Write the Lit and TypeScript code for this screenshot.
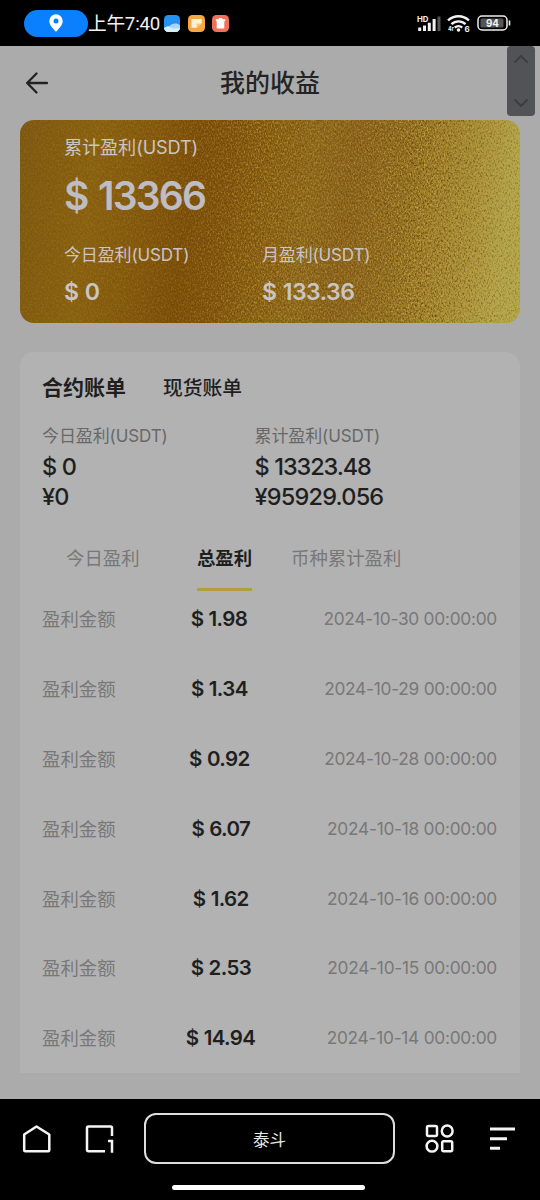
import { LitElement, html, css } from "lit";
import { customElement } from "lit/decorators.js";

const records = [
  { amount: "$ 1.98", date: "2024-10-30 00:00:00" },
  { amount: "$ 1.34", date: "2024-10-29 00:00:00" },
  { amount: "$ 0.92", date: "2024-10-28 00:00:00" },
  { amount: "$ 6.07", date: "2024-10-18 00:00:00" },
  { amount: "$ 1.62", date: "2024-10-16 00:00:00" },
  { amount: "$ 2.53", date: "2024-10-15 00:00:00" },
  { amount: "$ 14.94", date: "2024-10-14 00:00:00" },
];

@customElement("status-bar")
class StatusBar extends LitElement {
  static styles = css`
    :host { display: flex; height: 46px; background: #000; color: #f2f2f2; align-items: center; box-sizing: border-box; padding: 0 29px 0 24px; }
    svg { display: block; flex: none; }
    .pill { width: 64px; height: 27px; border-radius: 14px; background: #0b80ff; display: flex; align-items: center; justify-content: center; }
    .time { font: 400 18.7px/28px Roboto, "Noto Sans CJK SC", sans-serif; width: 70px; letter-spacing: -0.25px; white-space: nowrap; margin-top: 1px; }
    .apps { display: flex; gap: 7.500px; margin-left: 6px; }
    .right { margin-left: auto; display: flex; align-items: center; gap: 6px; }
    .t { font-family: Inter, sans-serif; font-weight: 700; fill: #f2f2f2; }
  `;
  render() {
    return html`
      <div class="pill"><svg width="14" height="18" viewBox="0 0 14 18"><path fill="#fff" fill-rule="evenodd" d="M7 .3a6.7 6.7 0 0 0-6.7 6.7C.3 11 3.6 14.200 7 17.700 10.400 14.200 13.700 11 13.700 7A6.700 6.700 0 0 0 7 .3Zm0 4.300a2.500 2.500 0 1 1 0 5 2.500 2.500 0 0 1 0-5Z"/></svg></div>
      <div class="time">上午7:40</div>
      <div class="apps">
        <svg width="16" height="17" viewBox="0 0 16 17"><defs><clipPath id="c"><rect width="16" height="17" rx="4.500"/></clipPath></defs><g clip-path="url(#c)"><rect width="16" height="17" fill="#2492f2"/><path d="M0 13.500c2-2 4-2.500 5.500-2.300C7.500 8 13 7.500 16 10v7H0Z" fill="#a8d5f7"/><path d="M0 13c3-2 5-2 7-.5 2.500 1.500 5 1 9 .5v4H0Z" fill="#d6edfc"/></g></svg>
        <svg width="17" height="17" viewBox="0 0 17 17"><rect width="17" height="17" rx="4.500" fill="#f5a843"/><path d="M3.500 4h10.200v4.500L8.500 12.800H3.500Z" fill="#fff1d8"/><path d="M8.500 12.800V8.500h5.200Z" fill="#f9c77c"/></svg>
        <svg width="17" height="17" viewBox="0 0 17 17"><rect width="17" height="17" rx="4.500" fill="#f0705a"/><path d="M3.800 4.200h3V3h3.400v1.200h3v2H3.800ZM4.700 6.200h7.600v7.300H4.700Z" fill="#fff"/></svg>
      </div>
      <div class="right">
        <svg width="24" height="18" viewBox="0 0 24 18"><text class="t" x="0" y="7.500" font-size="8" textLength="11.500" lengthAdjust="spacingAndGlyphs">HD</text><g stroke-width="3" fill="none"><path stroke="#f2f2f2" d="M2.700 13.500v3.500M7.500 11.500V17M12.300 8.700V17M17.100 5v12"/><path stroke="#555" d="M22 2.500V17"/></g></svg>
        <svg width="24" height="22" viewBox="0 -2 24 22"><g fill="none" stroke="#f2f2f2" stroke-width="2.400"><path d="M1 6.500a15 15 0 0 1 21 0M4.500 10.200a10 10 0 0 1 14 0M7.800 13.700a5.400 5.400 0 0 1 7.400 0"/></g><circle cx="11.500" cy="16" r="1.800" fill="#f2f2f2"/><text class="t" x="17.500" y="17.500" font-size="8">6</text><text class="t" x="1" y="17.300" font-size="5.500">4r</text></svg>
        <svg width="34" height="16" viewBox="0 0 34 16"><rect x="1" y="1" width="29" height="14" rx="4" fill="none" stroke="#eee" stroke-width="1.500"/><rect x="3.500" y="3.500" width="23" height="9" rx="1.500" fill="#555"/><path d="M32.500 5.500v5" stroke="#eee" stroke-width="1.600"/><text class="t" x="15.500" y="12" font-size="11" text-anchor="middle" textLength="13" lengthAdjust="spacingAndGlyphs">94</text></svg>
      </div>`;
  }
}

@customElement("gold-card")
class GoldCard extends LitElement {
  static styles = css`
    :host { display: grid; height: 203px; border-radius: 14px; overflow: hidden; color: #c9c5c4; font-family: Inter, "Noto Sans CJK SC", sans-serif; }
    .foil, .body { grid-area: 1 / 1; min-width: 0; }
    .foil { display: block; width: 100%; height: 203px; }
    .body { padding: 14px 0 0 44px; z-index: 1; }
    .label { font-size: 18.2px; line-height: 26px; white-space: nowrap; letter-spacing: -0.15px; }
    .total { font-size: 39px; line-height: 48px; font-weight: 600; margin-top: 12px; letter-spacing: -1.8px; word-spacing: 2.500px; color: #bdbdc3; }
    .cols { display: grid; grid-template-columns: 198px 1fr; margin-top: 22px; }
    .small { font-size: 17px; line-height: 26px; letter-spacing: -0.15px; white-space: nowrap; }
    .value { font-size: 23px; line-height: 30px; font-weight: 600; margin-top: 9px; letter-spacing: -0.5px; word-spacing: 1px; }
  `;
  render() {
    return html`
      <svg class="foil" viewBox="0 0 500 203" preserveAspectRatio="none">
        <defs>
          <linearGradient id="base" x1="0" x2="1" y1="0" y2="0.06">
            <stop offset="0" stop-color="#7e5811"/><stop offset=".16" stop-color="#896110"/><stop offset=".27" stop-color="#83580d"/>
            <stop offset=".36" stop-color="#7a4d09"/><stop offset=".43" stop-color="#7e510d"/><stop offset=".52" stop-color="#885f14"/><stop offset=".6" stop-color="#8c681d"/>
            <stop offset=".68" stop-color="#88611c"/><stop offset=".78" stop-color="#8e6c22"/><stop offset=".86" stop-color="#9d822f"/><stop offset=".94" stop-color="#ab963f"/><stop offset="1" stop-color="#b3a84e"/>
          </linearGradient>
          <linearGradient id="fade"><stop offset="0" stop-color="#fff" stop-opacity=".15"/><stop offset=".3" stop-color="#fff" stop-opacity=".25"/><stop offset=".48" stop-color="#fff" stop-opacity=".6"/><stop offset=".65" stop-color="#fff" stop-opacity=".45"/><stop offset=".8" stop-color="#fff" stop-opacity=".85"/><stop offset="1" stop-color="#fff" stop-opacity=".4"/></linearGradient>
          <mask id="m"><rect width="500" height="203" fill="url(#fade)"/></mask>
          <filter id="grain" x="0" y="0" width="100%" height="100%" color-interpolation-filters="sRGB">
            <feTurbulence type="fractalNoise" baseFrequency=".7 .45" numOctaves="3" seed="7"/>
            <feColorMatrix values="0 0 0 0 .82  0 0 0 0 .68  0 0 0 0 .26  2.600 0 0 0 -1.150"/>
          </filter>
          <filter id="dark" x="0" y="0" width="100%" height="100%" color-interpolation-filters="sRGB">
            <feTurbulence type="fractalNoise" baseFrequency=".65 .4" numOctaves="3" seed="21"/>
            <feColorMatrix values="0 0 0 0 .38  0 0 0 0 .22  0 0 0 0 .02  2.600 0 0 0 -1.150"/>
          </filter>
        </defs>
        <rect width="500" height="203" fill="url(#base)"/>
        <g mask="url(#m)"><rect width="500" height="203" filter="url(#dark)"/><rect width="500" height="203" filter="url(#grain)"/></g>
      </svg>
      <div class="body">
        <div class="label">累计盈利(USDT)</div>
        <div class="total">$ 13366</div>
        <div class="cols">
          <div><div class="small">今日盈利(USDT)</div><div class="value">$ 0</div></div>
          <div><div class="small">月盈利(USDT)</div><div class="value">$ 133.36</div></div>
        </div>
      </div>`;
  }
}

@customElement("bill-panel")
class BillPanel extends LitElement {
  static styles = css`
    :host { display: block; box-sizing: border-box; height: 721px; padding: 19.500px 23px 0 22px; background: #b2b2b2; border-radius: 14px 14px 0 0; color: #1f1f1f; font-family: Inter, "Noto Sans CJK SC", sans-serif; white-space: nowrap; }
    .kinds { display: flex; gap: 37px; align-items: center; height: 30px; font-weight: 500; font-size: 19.8px; }
    .kinds .on { font-weight: 700; font-size: 21px; }
    .sums { display: grid; grid-template-columns: 212.500px 1fr; margin-top: 21.500px; }
    .small { font-size: 17px; line-height: 26px; color: #686868; letter-spacing: -0.1px; }
    .num { font-size: 23.500px; line-height: 30px; font-weight: 500; letter-spacing: -1.1px; word-spacing: 0.500px; margin-top: 3px; }
    .num + .num { margin-top: 0.500px; letter-spacing: -0.8px; }
    .tabs { display: grid; grid-template-columns: repeat(3, 121.700px); justify-items: center; margin-top: 27.500px; font-size: 18.400px; line-height: 36px; color: #787878; }
    .tabs div { height: 51px; box-sizing: border-box; }
    .tabs .on { color: #1f1f1f; font-weight: 700; border-bottom: 3px solid #b39d3f; }
    .row { display: flex; justify-content: space-between; align-items: center; height: 69.800px; color: #787878; font-size: 18.400px; }
    .rows { margin-top: -7px; }
    .amount { color: #1f1f1f; font-weight: 600; font-size: 20.500px; letter-spacing: -0.6px; word-spacing: 0.500px; padding: 1px 1px 0 0; }
    .date { font-size: 17.300px; letter-spacing: -0.25px; padding-top: 1px; }
  `;
  render() {
    return html`
      <div class="kinds"><span class="on">合约账单</span><span>现货账单</span></div>
      <div class="sums">
        <div><div class="small">今日盈利(USDT)</div><div class="num">$ 0</div><div class="num">¥0</div></div>
        <div><div class="small">累计盈利(USDT)</div><div class="num">$ 13323.48</div><div class="num">¥95929.056</div></div>
      </div>
      <div class="tabs"><div>今日盈利</div><div class="on">总盈利</div><div>币种累计盈利</div></div>
      <div class="rows">${records.map((r) => html`<div class="row"><span>盈利金额</span><span class="amount">${r.amount}</span><span class="date">${r.date}</span></div>`)}</div>`;
  }
}

@customElement("browser-bar")
class BrowserBar extends LitElement {
  static styles = css`
    :host { display: block; height: 101px; background: #000; box-sizing: border-box; padding-top: 14px; }
    .tools { display: flex; align-items: center; height: 51px; padding-left: 22px; }
    svg { display: block; flex: none; fill: none; stroke: #f5f5f5; stroke-width: 2.500; }
    .windows { margin-left: 32.500px; }
    .address { box-sizing: border-box; flex: none; width: 251px; height: 51px; margin: 0 30px 0 29.500px; border: 2px solid #dedede; border-radius: 12px; display: flex; align-items: center; justify-content: center; color: #e6e6e6; font: 400 16.500px/24px "Noto Sans CJK SC", sans-serif; }
    .menu { margin-left: 35px; }
    .handle { width: 193px; height: 5px; border-radius: 3px; background: #fff; margin: 21px auto 0 172px; }
  `;
  render() {
    return html`
      <div class="tools">
        <svg width="30" height="30" viewBox="0 0 30 30"><path stroke-linejoin="round" d="M2.200 10.500 14.500 2.500l12.800 8v15.800q0 1-1 1H3.200q-1 0-1-1Z"/></svg>
        <svg class="windows" width="30" height="30" viewBox="0 0 30 30"><path d="M27 12V4q0-1.500-1.500-1.500h-22Q2 2.500 2 4v21.800q0 1.500 1.500 1.500H20M23 17h4v11.700"/></svg>
        <div class="address">泰斗</div>
        <svg width="30" height="30" viewBox="0 0 30 30"><rect x="2" y="2" width="10" height="10" rx="1.500"/><circle cx="22.200" cy="7" r="5.400"/><circle cx="7" cy="22.200" r="5.400"/><rect x="17.200" y="17.200" width="10" height="10" rx="1.500"/></svg>
        <svg class="menu" width="26" height="30" viewBox="0 0 26 30"><path stroke-width="3" d="M0 5h25M0 14.700h17M0 24.300h10"/></svg>
      </div>
      <div class="handle"></div>`;
  }
}

@customElement("app-root")
class AppRoot extends LitElement {
  static styles = css`
    :host { display: block; position: relative; width: 540px; height: 1200px; overflow: hidden; background: #ababab; }
    .header { height: 74px; display: grid; grid-template-columns: 74px 1fr 74px; align-items: center; box-sizing: border-box; }
    .back { justify-self: center; display: block; fill: none; stroke: #222; stroke-width: 2.300; stroke-linecap: round; stroke-linejoin: round; }
    .title { text-align: center; font: 500 25px/36px "Noto Sans CJK SC", sans-serif; color: #242424; padding-bottom: 4px; }
    .content { height: 979px; padding: 0 20px; display: flex; flex-direction: column; gap: 28.500px; }
    .scroll { position: absolute; z-index: 2; top: 46px; left: 507px; width: 28px; height: 70px; border-radius: 4px; background: #515357; display: flex; flex-direction: column; justify-content: space-between; align-items: center; padding: 8px 0; box-sizing: border-box; }
    .scroll svg { fill: none; stroke: #3b3d40; stroke-width: 1.800; display: block; }
  `;
  render() {
    return html`
      <status-bar></status-bar>
      <div class="header">
        <svg class="back" width="22" height="22" viewBox="0 0 22 22"><path d="M21 11H1.200M10.500 1.500 1.200 11l9.300 9.500"/></svg>
        <div class="title">我的收益</div>
      </div>
      <div class="content"><gold-card></gold-card><bill-panel></bill-panel></div>
      <browser-bar></browser-bar>
      <div class="scroll">
        <svg width="16" height="10" viewBox="0 0 16 10"><path d="M1.500 8.500 8 2l6.500 6.500"/></svg>
        <svg width="16" height="10" viewBox="0 0 16 10"><path d="M1.500 1.500 8 8l6.500-6.500"/></svg>
      </div>`;
  }
}
